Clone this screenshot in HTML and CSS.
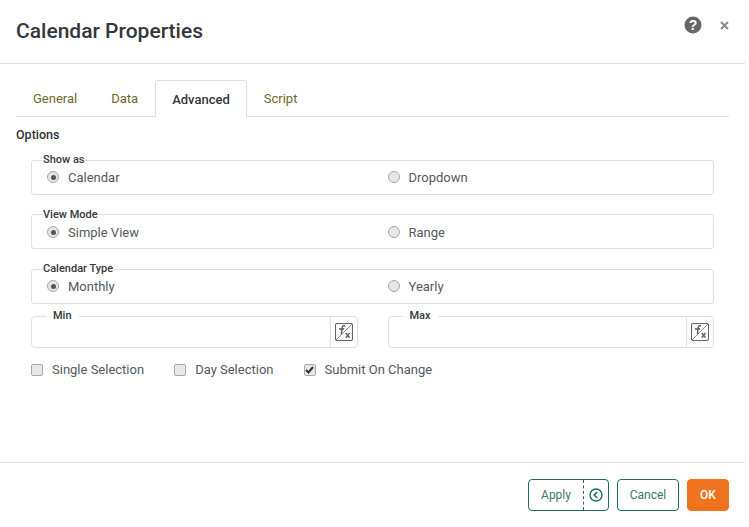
FILE: index.html
```html
<!DOCTYPE html>
<html lang="en">
<head>
  <meta charset="UTF-8">
  <title>Calendar Properties</title>
  <link rel="stylesheet" href="styles.css">
</head>
<body>
  <div class="dialog">
    <header class="dialog-header">
      <h1>Calendar Properties</h1>
      <div class="header-icons">
        <svg class="help-icon" width="18" height="18" viewBox="0 0 18 18"><circle cx="9" cy="9" r="8.500" fill="#666"/><text x="9" y="14" text-anchor="middle" class="help-mark">?</text></svg>
        <svg class="close-icon" width="9" height="9" viewBox="0 0 9 9"><path d="M1 1l7 7M8 1l-7 7" stroke="#8a8a8a" stroke-width="2"/></svg>
      </div>
    </header>

    <div class="dialog-body">
      <nav class="tabs">
        <a class="tab">General</a>
        <a class="tab">Data</a>
        <a class="tab active">Advanced</a>
        <a class="tab">Script</a>
      </nav>

      <div class="section-title">Options</div>

      <div class="options">
        <fieldset class="group">
          <legend>Show as</legend>
          <label class="radio-item"><span class="radio checked"></span>Calendar</label>
          <label class="radio-item"><span class="radio"></span>Dropdown</label>
        </fieldset>
        <fieldset class="group group-view">
          <legend>View Mode</legend>
          <label class="radio-item"><span class="radio checked"></span>Simple View</label>
          <label class="radio-item"><span class="radio"></span>Range</label>
        </fieldset>
        <fieldset class="group">
          <legend>Calendar Type</legend>
          <label class="radio-item"><span class="radio checked"></span>Monthly</label>
          <label class="radio-item"><span class="radio"></span>Yearly</label>
        </fieldset>

        <div class="range-row">
          <fieldset class="field">
            <legend>Min</legend>
            <div class="field-value"></div>
            <div class="fx-cell">
              <svg width="18" height="18" viewBox="0 0 18 18"><rect x=".5" y=".5" width="17" height="17" rx="1.5" fill="none" stroke="#666" stroke-width="1.100"/><path d="M1 17L17 1" stroke="#888"/><path d="M4 6h5M10 2.800H8.600q-1.100 0-1.300 1.200L6.400 11" fill="none" stroke="#5a5a5a" stroke-width="1.400"/><path d="M10.800 10l3.700 4.800M14.500 10l-3.700 4.800" stroke="#666" stroke-width="1.500"/></svg>
            </div>
          </fieldset>
          <fieldset class="field">
            <legend>Max</legend>
            <div class="field-value"></div>
            <div class="fx-cell">
              <svg width="18" height="18" viewBox="0 0 18 18"><rect x=".5" y=".5" width="17" height="17" rx="1.5" fill="none" stroke="#666" stroke-width="1.100"/><path d="M1 17L17 1" stroke="#888"/><path d="M4 6h5M10 2.800H8.600q-1.100 0-1.300 1.200L6.400 11" fill="none" stroke="#5a5a5a" stroke-width="1.400"/><path d="M10.800 10l3.700 4.800M14.500 10l-3.700 4.800" stroke="#666" stroke-width="1.500"/></svg>
            </div>
          </fieldset>
        </div>

        <div class="check-row">
          <label class="check-item"><span class="check"></span>Single Selection</label>
          <label class="check-item"><span class="check"></span>Day Selection</label>
          <label class="check-item"><span class="check checked">
            <svg width="9" height="8" viewBox="0 0 9 8"><path d="M1 4l2.500 2.500L8 1" fill="none" stroke="#333" stroke-width="2"/></svg>
          </span>Submit On Change</label>
        </div>
      </div>
    </div>

    <footer class="dialog-footer">
      <div class="btn apply-btn">
        <span class="apply-label">Apply</span>
        <span class="apply-arrow">
          <svg width="14" height="14" viewBox="0 0 14 14"><circle cx="7" cy="7" r="6" fill="none" stroke="#1d6b63" stroke-width="1.400"/><path d="M8.200 4L5.200 7l3 3" fill="none" stroke="#1d6b63" stroke-width="1.600"/></svg>
        </span>
      </div>
      <div class="btn cancel-btn">Cancel</div>
      <div class="btn ok-btn">OK</div>
    </footer>
  </div>
</body>
</html>
```
FILE: styles.css
```css
html, body {
  margin: 0;
  height: 100%;
  background: #fff;
}
body {
  font-family: Roboto, "Liberation Sans", sans-serif;
  font-size: 13px;
  color: #2f3337;
  overflow: hidden;
}
.dialog {
  width: 745px;
  height: 523px;
  display: flex;
  flex-direction: column;
}
.dialog-header {
  height: 63px;
  border-bottom: 1px solid #e2e2e2;
  display: flex;
  justify-content: space-between;
  padding: 0 16px;
}
h1 {
  margin: 0;
  padding-top: 18px;
  font-size: 21px;
  line-height: 27px;
  font-weight: 500;
  color: #33383c;
}
.header-icons {
  display: flex;
  align-items: center;
  gap: 18px;
  height: 50px;
}
.help-mark {
  font-family: "Liberation Sans", sans-serif;
  font-size: 14px;
  font-weight: 700;
  fill: #fff;
}
.dialog-body {
  flex: 1;
  padding: 16px 16px 0;
}
.tabs {
  display: flex;
  height: 36px;
  border-bottom: 1px solid #e0e0e0;
}
.tab {
  padding: 0 17px;
  height: 36px;
  line-height: 37px;
  color: #6b6b1f;
}
.tab.active {
  font-weight: 500;
  color: #33383c;
  background: #fff;
  border: 1px solid #e0e0e0;
  border-bottom: 0;
  border-radius: 3px 3px 0 0;
  padding: 0 16px;
  box-sizing: border-box;
  height: 37px;
}
.section-title {
  margin-top: 10px;
  line-height: 16px;
  font-size: 12.500px;
  font-weight: 500;
}
.options {
  padding: 0 15px;
}
.group {
  margin: 0 0 13px;
  padding: 0 0 0 15px;
  height: 41px;
  box-sizing: border-box;
  border: 1px solid #e0e0e0;
  border-radius: 3px;
  display: grid;
  grid-template-columns: 340.500px 1fr;
  align-items: center;
}
.options .group:first-child {
  margin-top: 11px;
}
.group-view {
  margin-bottom: 14px;
}
.group legend {
  margin-left: -4px;
  padding: 0;
  font-size: 11px;
  line-height: 13px;
  font-weight: 500;
  color: #33383c;
  transform: translateY(-1px);
}
.group-view legend {
  transform: none;
}
.radio-item, .check-item {
  display: flex;
  align-items: center;
  color: #55595d;
}
.radio-item {
  gap: 9px;
  margin-top: -7px;
}
.group-view .radio-item {
  margin-top: -5px;
}
.radio {
  width: 10px;
  height: 10px;
  border: 1px solid #a8a8a8;
  border-radius: 50%;
  background: #e6e6e6;
  position: relative;
}
.radio.checked::after {
  content: "";
  position: absolute;
  left: 2.500px;
  top: 2.500px;
  width: 5px;
  height: 5px;
  border-radius: 50%;
  background: #555;
}
.range-row {
  display: grid;
  grid-template-columns: 1fr 1fr;
  gap: 30px;
  margin-top: -7px;
}
.field {
  height: 38px;
  min-width: 0;
  box-sizing: border-box;
  margin: 0;
  padding: 0;
  border: 1px solid #e0e0e0;
  border-radius: 4px;
  display: flex;
}
.field legend {
  margin-left: 14px;
  padding: 0 7px;
  font-size: 11px;
  line-height: 13px;
  font-weight: 500;
  color: #33383c;
  transform: translateY(-1px);
}
.field-value {
  flex: 1;
}
.fx-cell {
  width: 26px;
  border-left: 1px solid #e0e0e0;
  display: flex;
  align-items: center;
  justify-content: center;
  margin-top: -7px;
}
.check-row {
  display: flex;
  margin-top: 14px;
  gap: 30px;
}
.check-item {
  gap: 9px;
}
.check {
  width: 10px;
  height: 10px;
  border: 1px solid #a8a8a8;
  border-radius: 2px;
  background: #e8e8e8;
  display: flex;
  align-items: center;
  justify-content: center;
}
.dialog-footer {
  height: 61px;
  border-top: 1px solid #e2e2e2;
  display: flex;
  justify-content: flex-end;
  align-items: flex-start;
  gap: 8px;
  padding: 16px 16px 0;
  box-sizing: border-box;
}
.btn {
  height: 32px;
  box-sizing: border-box;
  border: 1px solid #1d6b63;
  border-radius: 4px;
  font-size: 12px;
  line-height: 30px;
  color: #3d7770;
  text-align: center;
}
.apply-btn {
  width: 81px;
  display: flex;
}
.apply-label {
  flex: 1;
}
.apply-arrow {
  width: 24px;
  border-left: 1px dashed #1d6b63;
  display: flex;
  align-items: center;
  justify-content: center;
}
.cancel-btn {
  width: 62px;
}
.ok-btn {
  width: 42px;
  border-color: #f0741f;
  background: #f0741f;
  color: #fff;
  font-weight: 500;
}
```
